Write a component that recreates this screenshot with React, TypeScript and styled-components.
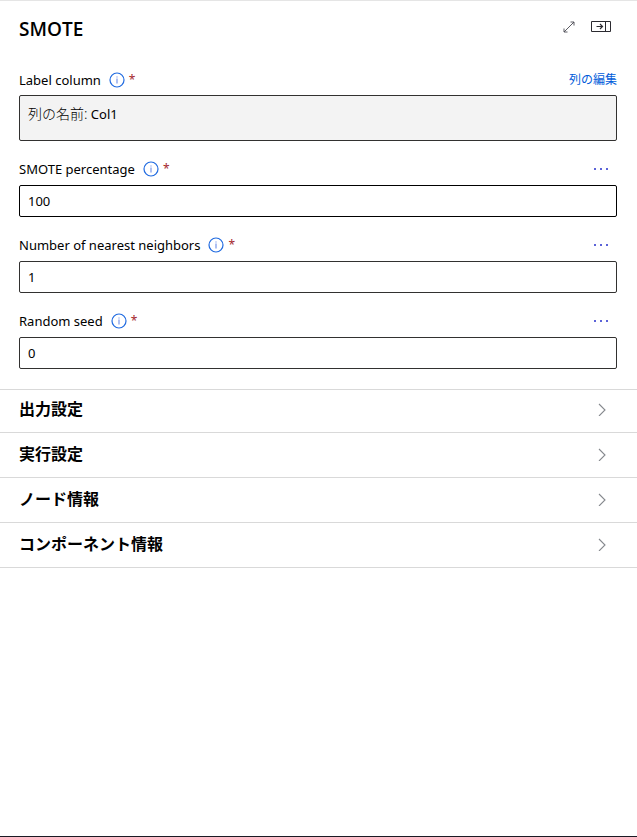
import React, { useState } from "react";
import styled, { createGlobalStyle } from "styled-components";

const GlobalStyle = createGlobalStyle`
  *, *::before, *::after { box-sizing: border-box; }
  body {
    margin: 0;
    background: #ffffff;
    color: #000000;
    font-family: "Noto Sans", "Noto Sans CJK JP", sans-serif;
    font-size: 13px;
    line-height: 20px;
  }
  button, input { font: inherit; color: inherit; }
`;

const Panel = styled.main`
  display: flex;
  flex-direction: column;
  min-height: 100vh;
  border-top: 1px solid #e5e5e5;
  border-bottom: 1px solid #1b1a24;
`;

const Header = styled.header`
  display: flex;
  align-items: center;
  justify-content: space-between;
  height: 56px;
  padding: 0 25px 0 19px;
`;

const Title = styled.h1`
  margin: 0;
  font-family: "Open Sans", sans-serif;
  font-size: 19px;
  font-weight: 600;
  line-height: 28px;
`;

const Actions = styled.div`
  display: flex;
  align-items: center;
  gap: 15px;
  padding-bottom: 4px;
`;

const IconButton = styled.button`
  display: flex;
  align-items: center;
  justify-content: center;
  padding: 0;
  border: 0;
  background: none;
  cursor: pointer;
`;

const Form = styled.form`
  display: flex;
  flex-direction: column;
  gap: 16px;
  padding: 11px 20px 20px 19px;
`;

const Field = styled.div<{ $gap: number }>`
  display: flex;
  flex-direction: column;
  gap: ${(p) => p.$gap}px;
`;

const FieldHeader = styled.div`
  display: flex;
  align-items: center;
  justify-content: space-between;
  height: 24px;
`;

const LabelGroup = styled.div`
  display: flex;
  align-items: center;
`;

const Label = styled.label`
  margin-right: 8px;
`;

const Required = styled.span`
  margin-left: 4px;
  color: #a4262c;
  font-size: 12px;
`;

const EditLink = styled.a`
  color: #015cda;
  font-size: 12px;
  text-decoration: none;
`;

const MoreButton = styled(IconButton)`
  width: 32px;
  height: 24px;
`;

const TextInput = styled.input<{ $active?: boolean }>`
  width: 100%;
  height: 32px;
  padding: 0 8px;
  border: 1px solid ${(p) => (p.$active ? "#000000" : "#323130")};
  border-radius: 2px;
  background: #ffffff;
  outline: none;
`;

const ColumnBox = styled.output`
  display: block;
  min-height: 46px;
  padding: 8px;
  border: 1px solid #323130;
  border-radius: 2px;
  background: #f3f3f3;
`;

const ColumnCaption = styled.span`
  color: #000000;
  font-size: 14px;
  font-weight: 300;
`;

const Sections = styled.div`
  border-top: 1px solid #d9d9d9;
`;

const SectionButton = styled.button`
  display: flex;
  align-items: center;
  justify-content: space-between;
  width: 100%;
  height: 45px;
  padding: 0 30px 2px 19px;
  border: 0;
  border-bottom: 1px solid #d9d9d9;
  background: none;
  font-size: 16px;
  font-weight: 700;
  line-height: 24px;
  text-align: left;
  cursor: pointer;

  &:first-child {
    height: 43px;
    padding-bottom: 4px;
  }
`;

const InfoIcon = () => (
  <svg width="16" height="16" viewBox="0 0 16 16" fill="none" aria-hidden="true">
    <circle cx="8" cy="8" r="7" stroke="#1f6ae0" strokeWidth="1.2" />
    <path d="M8 6.6V11.4" stroke="#6a8be8" strokeWidth="1.1" />
    <path d="M8 4.4V5.5" stroke="#6a8be8" strokeWidth="1.1" />
  </svg>
);

const ExpandIcon = () => (
  <svg width="12" height="12" viewBox="0 0 12 12" fill="none" stroke="#4a4a52" strokeWidth="0.9" aria-hidden="true">
    <path d="M1 11L11 1M7.5 1H11V4.5M1 7.5V11H4.5" />
  </svg>
);

const DockIcon = () => (
  <svg width="22" height="12" viewBox="0 0 22 12" fill="none" stroke="#2b2a30" aria-hidden="true">
    <path d="M1.5 0.5H20.5V10.5H1.5ZM15.5 0.5V10.5" />
    <path d="M6.5 5.5H12.5M10 3L12.5 5.5L10 8" strokeWidth="1.2" />
  </svg>
);

const MoreIcon = () => (
  <svg width="16" height="4" viewBox="0 0 16 4" fill="#5b63d8" aria-hidden="true">
    <path d="M1 1H3V3H1ZM7 1H9V3H7ZM13 1H15V3H13Z" />
  </svg>
);

const ChevronIcon = () => (
  <svg width="10" height="14" viewBox="0 0 10 14" fill="none" stroke="#86898e" strokeWidth="1.1" aria-hidden="true">
    <path d="M2 2L8 8L2 14" />
  </svg>
);

const parameters = [
  { id: "percentage", label: "SMOTE percentage", value: "100", active: true },
  { id: "neighbors", label: "Number of nearest neighbors", value: "1", active: false },
  { id: "seed", label: "Random seed", value: "0", active: false },
];

const sections = ["出力設定", "実行設定", "ノード情報", "コンポーネント情報"];

function FieldLabel({ id, text }: { id: string; text: string }) {
  return (
    <LabelGroup>
      <Label htmlFor={id}>{text}</Label>
      <IconButton type="button" aria-label={`${text} info`}>
        <InfoIcon />
      </IconButton>
      <Required>*</Required>
    </LabelGroup>
  );
}

export default function App() {
  const [values, setValues] = useState<Record<string, string>>(
    Object.fromEntries(parameters.map((p) => [p.id, p.value]))
  );

  return (
    <>
      <GlobalStyle />
      <Panel>
        <Header>
          <Title>SMOTE</Title>
          <Actions>
            <IconButton type="button" aria-label="Expand">
              <ExpandIcon />
            </IconButton>
            <IconButton type="button" aria-label="Dock panel">
              <DockIcon />
            </IconButton>
          </Actions>
        </Header>
        <Form onSubmit={(e) => e.preventDefault()}>
          <Field $gap={3}>
            <FieldHeader>
              <FieldLabel id="column" text="Label column" />
              <EditLink href="#edit">列の編集</EditLink>
            </FieldHeader>
            <ColumnBox id="column">
              <ColumnCaption>列の名前:</ColumnCaption> Col1
            </ColumnBox>
          </Field>
          {parameters.map((p) => (
            <Field key={p.id} $gap={4}>
              <FieldHeader>
                <FieldLabel id={p.id} text={p.label} />
                <MoreButton type="button" aria-label={`${p.label} options`}>
                  <MoreIcon />
                </MoreButton>
              </FieldHeader>
              <TextInput
                id={p.id}
                $active={p.active}
                value={values[p.id]}
                onChange={(e) => setValues({ ...values, [p.id]: e.target.value })}
              />
            </Field>
          ))}
        </Form>
        <Sections>
          {sections.map((name) => (
            <SectionButton key={name} type="button" aria-expanded={false}>
              {name}
              <ChevronIcon />
            </SectionButton>
          ))}
        </Sections>
      </Panel>
    </>
  );
}
